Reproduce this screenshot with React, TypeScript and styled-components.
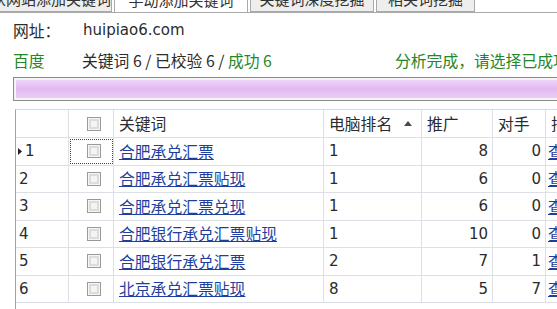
import React from 'react';
import styled, { createGlobalStyle } from 'styled-components';

interface Row {
  no: number;
  keyword: string;
  pcRank: number;
  ads: number;
  rivals: number;
}

const rows: Row[] = [
  { no: 1, keyword: '合肥承兑汇票', pcRank: 1, ads: 8, rivals: 0 },
  { no: 2, keyword: '合肥承兑汇票贴现', pcRank: 1, ads: 6, rivals: 0 },
  { no: 3, keyword: '合肥承兑汇票兑现', pcRank: 1, ads: 6, rivals: 0 },
  { no: 4, keyword: '合肥银行承兑汇票贴现', pcRank: 1, ads: 10, rivals: 0 },
  { no: 5, keyword: '合肥银行承兑汇票', pcRank: 2, ads: 7, rivals: 1 },
  { no: 6, keyword: '北京承兑汇票贴现', pcRank: 8, ads: 5, rivals: 7 }
];

const tabs = [
  { label: '从网站添加关键词', width: 122, active: false },
  { label: '手动添加关键词', width: 134, active: true },
  { label: '关键词深度挖掘', width: 124, active: false },
  { label: '相关词挖掘', width: 99, active: false }
];

const GREEN = '#23872a';
const COLS = '53px 45px 210px 98px 71px 53px 120px';

const GlobalStyle = createGlobalStyle`
  body {
    margin: 0;
    background: #fff;
    font-family: "Noto Sans CJK SC", "DejaVu Sans", sans-serif;
    font-size: 15.8px;
    color: #2b2b2b;
    overflow: hidden;
  }
`;

const Page = styled.div`
  width: 557px;
  height: 309px;
  overflow: hidden;
  display: flex;
  flex-direction: column;
`;

const TabStrip = styled.div`
  height: 12px;
  display: flex;
  align-items: flex-end;
  gap: 2px;
  margin-left: -10px;
  overflow: hidden;
  border-bottom: 1px solid #a9a9a9;
  flex-shrink: 0;
`;

const Tab = styled.div<{ $active: boolean; $width: number }>`
  box-sizing: border-box;
  width: ${p => p.$width}px;
  height: 28px;
  margin-bottom: ${p => (p.$active ? '-1px' : '0')};
  border: 1px solid #a9a9a9;
  border-bottom: ${p => (p.$active ? 'none' : '1px solid #a9a9a9')};
  background: ${p => (p.$active ? '#fff' : '#eeeeee')};
  display: flex;
  align-items: center;
  justify-content: center;
  font-size: 15px;
  color: #333;
  white-space: nowrap;
  flex-shrink: 0;
`;

const Form = styled.div`
  padding: 2px 0 0 13px;
  display: flex;
  flex-direction: column;
`;

const FormRow = styled.div`
  height: 30px;
  display: flex;
  align-items: center;
  white-space: nowrap;
`;

const Label = styled.span<{ $green?: boolean }>`
  width: 69px;
  flex-shrink: 0;
  color: ${p => (p.$green ? GREEN : '#2b2b2b')};
`;

const Url = styled.span`
  font-family: "DejaVu Sans", sans-serif;
  font-size: 15px;
  margin-left: 1px;
`;

const Stats = styled.span`
  width: 313px;
  flex-shrink: 0;
`;

const Green = styled.span`
  color: ${GREEN};
`;

const Progress = styled.div`
  margin: 2px 0 0 13px;
  height: 24px;
  box-sizing: border-box;
  border: 1px solid #8c8c8c;
  border-right: none;
  padding: 2px 0 2px 2px;
  background: #f4f4f4;
  flex-shrink: 0;
`;

const ProgressFill = styled.div`
  height: 100%;
  background: linear-gradient(#eed6f7, #e2b9f1 50%, #eacdf5);
`;

const Grid = styled.div`
  margin: 8px 0 0 15px;
  flex: 1;
  border-left: 1px solid #a3a3a3;
  border-top: 1px solid #d6d9df;
`;

const GridRow = styled.div<{ $header?: boolean }>`
  display: grid;
  grid-template-columns: ${COLS};
  height: ${p => (p.$header ? '28px' : '27.5px')};
  box-sizing: border-box;
  border-bottom: 1px solid #dcdfe5;
`;

const Cell = styled.div<{ $align?: 'left' | 'right' | 'center'; $focus?: boolean }>`
  box-sizing: border-box;
  border-right: 1px solid #dcdfe5;
  display: flex;
  align-items: center;
  justify-content: ${p =>
    p.$align === 'right' ? 'flex-end' : p.$align === 'center' ? 'center' : 'flex-start'};
  padding: ${p => (p.$align === 'right' ? '0 4px 0 0' : '0 0 0 5px')};
  white-space: nowrap;
  overflow: hidden;
  outline: ${p => (p.$focus ? '1px dotted #444' : 'none')};
  outline-offset: -2px;
`;

const NumText = styled.span`
  font-family: "DejaVu Sans", sans-serif;
  font-size: 15px;
`;

const RowHead = styled(Cell)`
  padding-left: 2px;
  gap: 2px;
`;

const Marker = styled.span<{ $show: boolean }>`
  width: 5px;
  display: inline-flex;
  visibility: ${p => (p.$show ? 'visible' : 'hidden')};
`;

const Check = styled.span`
  width: 14px;
  height: 14px;
  box-sizing: border-box;
  border: 1px solid #9a9a9a;
  box-shadow: inset 0 0 0 1px #f6f6f6, inset 0 0 0 3px #dcdcdc;
  background: #f4f4f4;
`;

const Link = styled.a`
  color: #1f3f9f;
  text-decoration: underline;
  cursor: pointer;
`;

const SortArrow = () => (
  <svg width="8" height="5" viewBox="0 0 8 5" style={{ marginLeft: 12 }}>
    <polygon points="4,0 8,5 0,5" fill="#4a4a4a" />
  </svg>
);

const RowArrow = () => (
  <svg width="4" height="7" viewBox="0 0 4 7">
    <polygon points="0,0 4,3.5 0,7" fill="#222" />
  </svg>
);

export default function App() {
  return (
    <Page>
      <GlobalStyle />
      <TabStrip>
        {tabs.map(t => (
          <Tab key={t.label} $active={t.active} $width={t.width}>
            {t.label}
          </Tab>
        ))}
      </TabStrip>

      <Form>
        <FormRow>
          <Label>网址：</Label>
          <Url>huipiao6.com</Url>
        </FormRow>
        <FormRow>
          <Label $green>百度</Label>
          <Stats>
            关键词 6 / 已校验 6 / <Green>成功 6</Green>
          </Stats>
          <Green>分析完成，请选择已成功的关键词</Green>
        </FormRow>
      </Form>

      <Progress>
        <ProgressFill />
      </Progress>

      <Grid>
        <GridRow $header>
          <Cell />
          <Cell $align="center">
            <Check />
          </Cell>
          <Cell>关键词</Cell>
          <Cell>
            电脑排名
            <SortArrow />
          </Cell>
          <Cell>推广</Cell>
          <Cell>对手</Cell>
          <Cell>排名查询</Cell>
        </GridRow>
        {rows.map((r, i) => (
          <GridRow key={r.no}>
            <RowHead>
              <Marker $show={i === 0}>
                <RowArrow />
              </Marker>
              <NumText style={i === 0 ? undefined : { marginLeft: -6 }}>{r.no}</NumText>
            </RowHead>
            <Cell $align="center" $focus={i === 0}>
              <Check />
            </Cell>
            <Cell>
              <Link>{r.keyword}</Link>
            </Cell>
            <Cell>
              <NumText>{r.pcRank}</NumText>
            </Cell>
            <Cell $align="right">
              <NumText>{r.ads}</NumText>
            </Cell>
            <Cell $align="right">
              <NumText>{r.rivals}</NumText>
            </Cell>
            <Cell style={{ paddingLeft: 2 }}>
              <Link>查看</Link>
            </Cell>
          </GridRow>
        ))}
      </Grid>
    </Page>
  );
}
